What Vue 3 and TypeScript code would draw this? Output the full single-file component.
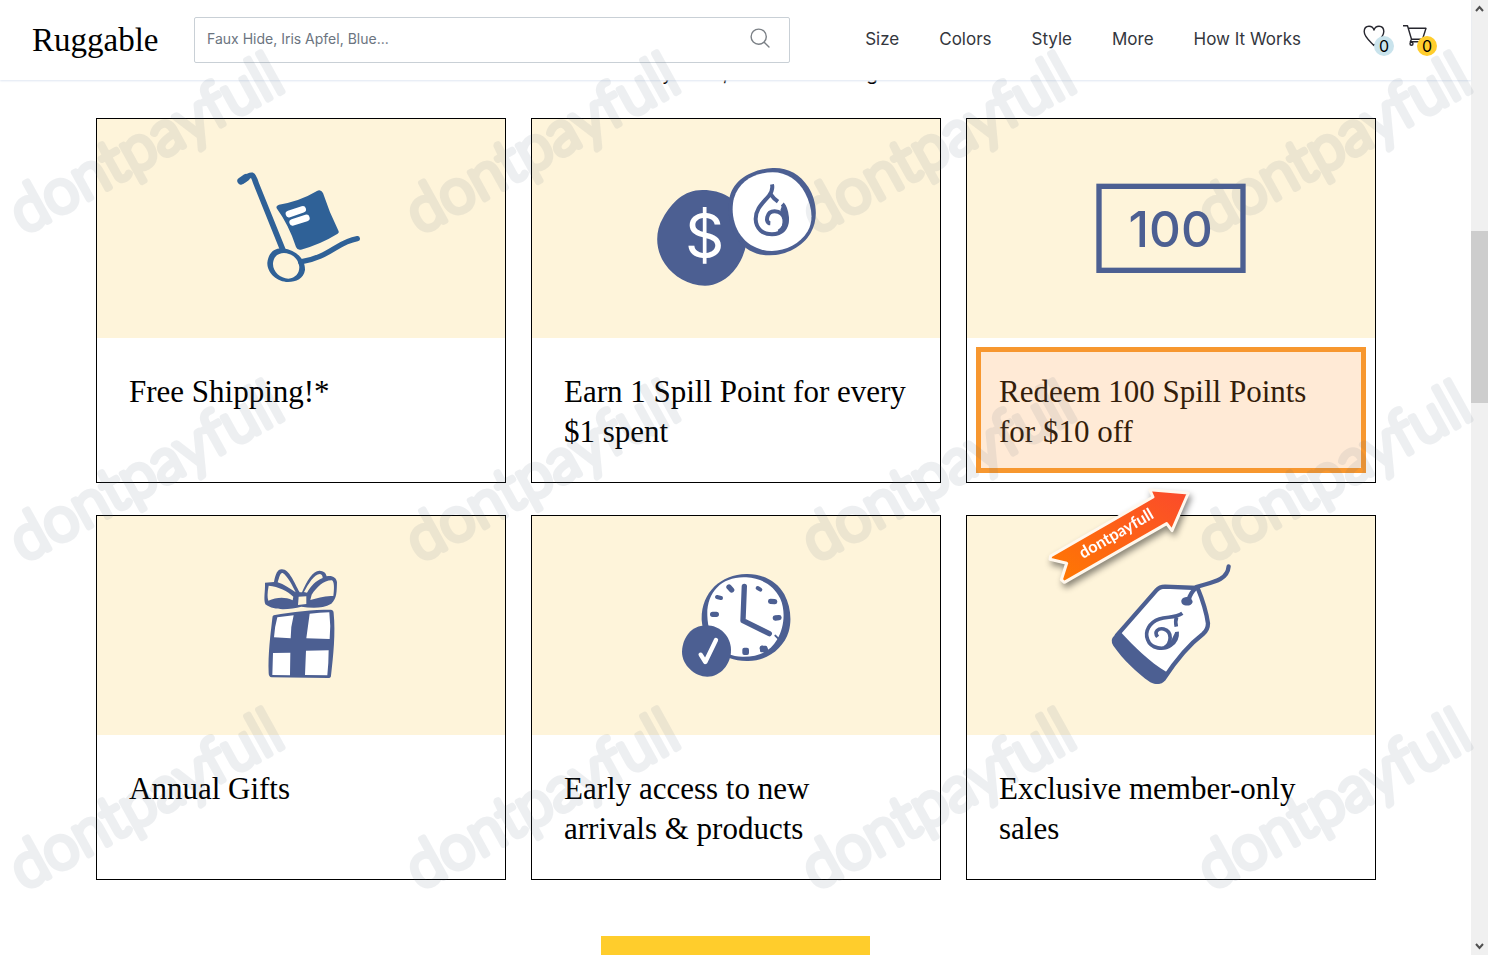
<script setup lang="ts">
interface Perk {
  id: string
  title: string
  highlighted?: boolean
}

const links: string[] = ['Size', 'Colors', 'Style', 'More', 'How It Works']

const perks: Perk[] = [
  { id: 'shipping', title: 'Free Shipping!*' },
  { id: 'earn', title: 'Earn 1 Spill Point for every $1 spent' },
  { id: 'redeem', title: 'Redeem 100 Spill Points for $10 off', highlighted: true },
  { id: 'gifts', title: 'Annual Gifts' },
  { id: 'early', title: 'Early access to new arrivals & products' },
  { id: 'sales', title: 'Exclusive member-only sales' },
]

const marks = [0, 1, 2].flatMap((row) =>
  [0, 1, 2, 3].map((col) => ({ x: 24 + col * 396, y: 235 + row * 328 })),
)
</script>

<template>
  <div class="shell">
    <div class="page">
      <header class="header">
        <a class="logo" href="#">Ruggable</a>
        <form class="search" role="search" @submit.prevent>
          <input type="text" aria-label="Search" placeholder="Faux Hide, Iris Apfel, Blue..." />
          <button type="submit" aria-label="Search">
            <svg width="20" height="20" viewBox="0 0 20 20" fill="none" stroke="#7b8086" stroke-width="1.4">
              <circle cx="8.7" cy="8.7" r="7.6" />
              <path d="M14.2 14.2L19 19" stroke-linecap="round" />
            </svg>
          </button>
        </form>
        <nav class="nav">
          <a v-for="link in links" :key="link" href="#">{{ link }}</a>
        </nav>
        <div class="tools">
          <a class="tool" href="#" aria-label="Wishlist">
            <svg width="24" height="24" viewBox="0 0 24 24" fill="none" stroke="#26262e" stroke-width="1.4" stroke-linejoin="round">
              <path d="M11 21.5C8 18 1.2 13.5 1.2 7.6C1.2 4 3.5 2.2 6 2.2C8.5 2.2 10.3 3.8 11 6C11.7 3.8 13.5 2.2 16 2.2C18.5 2.2 20.8 4 20.8 7.6C20.8 13.5 14 18 11 21.5Z" />
            </svg>
            <span class="count blue">0</span>
          </a>
          <a class="tool" href="#" aria-label="Cart">
            <svg width="26" height="24" viewBox="0 0 26 24" fill="none" stroke="#26262e" stroke-width="1.4" stroke-linejoin="round">
              <path d="M0 1.7H4.5L8.5 15.2H19.5L23 4.3H5.5M8.5 15.2L7.3 17.8H20" />
              <circle cx="8.5" cy="19.8" r="1.5" />
              <circle cx="18" cy="19.8" r="1.5" />
            </svg>
            <span class="count gold">0</span>
          </a>
        </div>
      </header>

      <main>
        <p class="intro"><span>y</span><span>,</span><span>g</span></p>

        <section class="grid">
          <article v-for="perk in perks" :key="perk.id" class="card">
            <div class="media">
              <svg width="408" height="219" viewBox="0 0 408 219" aria-hidden="true">
                <g v-if="perk.id === 'shipping'" transform="translate(123 41) scale(.3333)">
                  <path d="M64 64C76 61 81 44 96 46C103 49 103 58 109 72L188 268" fill="none" stroke="#2f6197" stroke-width="17" stroke-linecap="round" />
                  <path d="M63 63L78 53" stroke="#2f6197" stroke-width="22" stroke-linecap="round" />
                  <path d="M242 306C330 291 351 246 412 236" fill="none" stroke="#2f6197" stroke-width="16" stroke-linecap="round" />
                  <path fill="#2f6197" fill-rule="evenodd" d="M188 265C230 271 256 297 255 330C251 356 229 366 204 366C173 365 141 340 142 308C145 279 163 263 188 265ZM192 279C170 280 160 293 159 312C159 336 181 355 205 356C227 354 238 340 238 321C236 298 218 280 192 279Z" />
                  <path fill="#2f6197" d="M177 134Q239 124 291 93Q302 87 309 99Q328 158 356 214Q358 218 353 221Q303 252 243 269Q233 272 228 261Q207 196 170 145Q167 138 177 134Z" />
                  <path d="M207 162L248 148M218 187L259 174" stroke="#fff" stroke-width="20" stroke-linecap="round" />
                </g>

                <g v-else-if="perk.id === 'earn'" transform="translate(108 31) scale(.3333)">
                  <path fill="#4c5f92" d="M187 120C242 119 290 146 312 190C334 238 321 307 291 350C263 391 225 407 195 407C145 406 102 381 75 342C47 302 43 247 69 204C96 157 132 120 187 120Z" />
                  <text x="194" y="325" class="dollar">$</text>
                  <path fill="#4c5f92" d="M398 54C442 52 480 72 505 111C531 153 536 208 512 249C488 290 439 316 389 316C349 316 318 300 296 272C270 241 262 196 268 149C276 91 334 58 398 54Z" />
                  <path fill="#fff" d="M398 67C440 67 475 91 495 128C515 167 523 209 503 244C481 281 437 303 396 303C356 302 324 286 302 256C279 224 273 180 282 145C296 94 345 67 398 67Z" />
                  <g fill="none" stroke="#4c5f92" stroke-width="12">
                    <path d="M396 103C399 116 394 128 387 137C370 158 347 175 347 207C348 237 369 253 396 253C426 253 443 234 441 203C439 182 435 170 427 162" />
                    <path d="M390 130Q401 146 414 155" />
                    <path d="M391 220C374 219 379 184 404 184C437 184 445 229 416 245" />
                  </g>
                  <path fill="#4c5f92" d="M427 164C438 174 451 201 443 222C435 243 418 252 408 250C431 235 435 203 421 181Z" />
                </g>

                <g v-else-if="perk.id === 'redeem'" transform="translate(113 51) scale(.3333)">
                  <rect x="57" y="49" width="432" height="252" fill="none" stroke="#4c5f92" stroke-width="16" />
                  <text x="272" y="230" class="hundred">100</text>
                </g>

                <g v-else-if="perk.id === 'gifts'" transform="translate(143 39) scale(.3333)">
                  <path fill="#4c5f92" d="M101 181C158 170 219 164 272 164Q281 164 281 175C287 235 280 302 273 362Q273 369 264 369L95 367Q86 366 86 354C84 295 91 244 97 190Q97 183 101 181Z" />
                  <path fill="#fff" d="M112 187L161 181Q152 214 152 250L102 247Q104 215 112 187ZM209 176Q238 173 268 172Q273 212 269 252L199 250ZM99 294L151 293L150 361L97 360ZM198 287L266 286Q266 323 262 361L195 360Z" />
                  <path fill="#4c5f92" d="M75 83L102 81C107 57 112 43 125 43C148 42 163 84 179 112L186 112C200 77 220 46 239 47C250 48 258 53 260 64C275 60 290 67 291 82C290 110 291 130 274 146C246 162 213 159 184 155C151 163 105 170 76 148C70 131 76 110 75 83Z" />
                  <g fill="#fef4da">
                    <path d="M113 82C119 63 121 52 128 54C142 62 157 91 167 112C148 99 132 88 113 82Z" />
                    <path d="M192 111C205 87 222 58 240 57Q248 59 248 69C225 78 213 94 201 113Z" />
                    <path d="M86 92C116 95 143 108 160 125L158 136C132 124 109 128 85 137Q80 124 86 92Z" />
                    <path d="M215 119C231 96 252 75 276 76C283 80 283 101 280 123C254 121 232 130 211 135Z" />
                    <path d="M176 125L199 124L199 147L174 150Z" />
                  </g>
                </g>

                <g v-else-if="perk.id === 'early'" transform="translate(138 44) scale(.3333)">
                  <path fill="#4c5f92" d="M229 42C278 41 321 63 343 103C362 139 366 181 356 215C341 264 291 305 230 303C155 303 100 251 95 180C93 98 151 44 229 42Z" />
                  <path fill="#fff" d="M229 52C277 55 312 77 331 116C347 152 343 202 322 238C302 273 270 290 221 290C156 292 114 239 112 167C110 95 157 48 229 52Z" />
                  <path d="M223 79L219 182L298 221" fill="none" stroke="#4c5f92" stroke-width="16" stroke-linecap="round" stroke-linejoin="round" />
                  <g stroke="#4c5f92" stroke-width="16" stroke-linecap="round">
                    <path d="M177 81L185 90M128 163L139 163M302 124L314 125M316 174L327 173M277 265L286 269" />
                    <path d="M141 111L153 114M263 84L271 89" stroke-width="12" />
                    <path d="M316 227L325 236" stroke-width="6" />
                  </g>
                  <rect x="217" y="263" width="20" height="22" rx="6" fill="#4c5f92" />
                  <rect x="270" y="257" width="22" height="20" rx="5" fill="#4c5f92" />
                  <path fill="#4c5f92" d="M108 196C151 196 182 229 183 269C184 312 151 350 112 350C75 350 36 316 36 275C38 231 65 197 108 196Z" />
                  <path d="M92 284L106 306L138 240" fill="none" stroke="#fff" stroke-width="13" stroke-linecap="round" stroke-linejoin="round" />
                </g>

                <g v-else transform="translate(63 -36) scale(.3333)">
                  <path fill="#fff" stroke="#4c5f92" stroke-width="13" stroke-linejoin="round" d="M260 467L379 331Q389 320 405 320L503 324C517 358 529 395 534 430Q534 450 519 462C473 497 435 545 401 597Q388 611 370 602Z" />
                  <path fill="#4c5f92" d="M272 456C313 500 356 544 411 577L398 602Q384 619 361 607C318 575 281 541 250 497Q239 480 252 468Z" />
                  <path d="M500 322Q480 339 476 360M499 321C535 308 592 306 596 259" fill="none" stroke="#4c5f92" stroke-width="13" stroke-linecap="round" />
                  <path fill="#4c5f92" d="M461 353C474 348 486 355 488 366C486 378 466 380 457 372C452 365 453 357 461 353Z" />
                  <g fill="none" stroke="#4c5f92" stroke-width="11">
                    <path d="M457 400C436 415 413 409 388 417C359 427 343 454 353 479C363 507 401 511 422 496C439 484 443 470 441 455" />
                    <path d="M440 411Q435 424 439 440" />
                    <path d="M383 471C370 454 386 444 401 447C429 455 424 491 404 503" />
                  </g>
                  <path fill="#4c5f92" d="M436 456H446C443 482 428 504 404 507C422 491 427 473 436 456Z" />
                </g>
              </svg>
            </div>
            <div class="body">
              <h2>{{ perk.title }}</h2>
              <div v-if="perk.highlighted" class="frame"></div>
            </div>
            <svg v-if="perk.highlighted" class="arrow" width="220" height="120" viewBox="0 0 660 360">
              <defs>
                <linearGradient id="flame" x1="0" y1="1" x2="1" y2="0">
                  <stop offset="0" stop-color="#ff7a00" />
                  <stop offset="1" stop-color="#fb4a2c" />
                </linearGradient>
              </defs>
              <path fill="url(#flame)" stroke="#fff8ee" stroke-width="9" stroke-linejoin="round" d="M359 29L475 39L426 152L410 131L103 307L94 299L110 250L60 238L62 228L369 51Z" />
              <text class="tag" transform="translate(159 237) rotate(-30)">dontpayfull</text>
            </svg>
          </article>
        </section>

        <button class="cta" type="button" aria-label="Join"></button>
      </main>
    </div>

    <div class="scrollbar">
      <svg width="17" height="17" viewBox="0 0 17 17" fill="none" stroke="#505050" stroke-width="2">
        <path d="M5 11L8.5 7L12 11" />
      </svg>
      <div class="thumb"></div>
      <svg width="17" height="17" viewBox="0 0 17 17" fill="none" stroke="#505050" stroke-width="2">
        <path d="M5 6L8.5 10L12 6" />
      </svg>
    </div>

    <svg class="watermark" aria-hidden="true">
      <text v-for="(m, i) in marks" :key="i" :transform="`translate(${m.x} ${m.y}) rotate(-29)`">dontpayfull</text>
    </svg>
  </div>
</template>

<style>
body {
  margin: 0;
  background: #fff;
}
</style>

<style scoped>
* {
  box-sizing: border-box;
}

.shell {
  position: relative;
  display: flex;
  height: 100vh;
  overflow: hidden;
  background: #fff;
  font-family: Inter, "Liberation Sans", sans-serif;
}

.page {
  flex: 1;
  min-width: 0;
}

.header {
  position: relative;
  z-index: 2;
  display: flex;
  align-items: center;
  height: 80px;
  padding: 0 34px 0 32px;
  background: #fff;
  box-shadow: 0 1px 2px #dfe6f2;
}

a {
  color: #33363d;
  text-decoration: none;
}

.logo {
  width: 162px;
  color: #000;
  font: 33px/40px "Liberation Serif", serif;
}

.search {
  display: flex;
  flex: 1;
  height: 46px;
  margin-right: 75px;
  border: 1px solid #c9d0d6;
  border-radius: 2px;
}

.search input {
  flex: 1;
  min-width: 0;
  padding: 0 12px 2px;
  border: 0;
  outline: 0;
  background: none;
  font: 14px/20px Inter, sans-serif;
}

.search input::placeholder {
  color: #6b7480;
  opacity: 1;
}

.search button {
  display: flex;
  align-items: center;
  padding: 0 19px 4px;
  border: 0;
  background: none;
}

.nav {
  display: flex;
  gap: 40px;
  margin-right: 62px;
  padding-bottom: 2px;
  font-size: 17px;
  line-height: 24px;
  white-space: nowrap;
}

.tools {
  display: flex;
  gap: 16px;
  width: 74px;
}

.tool {
  position: relative;
  width: 24px;
  height: 32px;
}

.count {
  position: absolute;
  top: 12px;
  left: 11px;
  width: 20px;
  height: 20px;
  border-radius: 50%;
  color: #000;
  font-size: 16px;
  line-height: 20px;
  text-align: center;
}

.blue {
  background: #c9e3ec;
}

.gold {
  left: 14px;
  background: #ffcd2c;
}

.intro {
  display: flex;
  height: 38px;
  margin: 0;
  padding-left: 662px;
  color: #000;
  font-size: 19px;
  line-height: 24px;
}

.intro span {
  margin-top: -18px;
}

.intro span + span {
  margin-left: 50px;
}

.intro span:last-child {
  margin-left: 138px;
}

.grid {
  display: grid;
  grid-template-columns: repeat(3, 1fr);
  gap: 32px 25px;
  padding: 0 95px 0 96px;
}

.card {
  position: relative;
  display: flex;
  flex-direction: column;
  border: 1px solid #000;
}

.media {
  display: flex;
  justify-content: center;
  height: 219px;
  background: #fef4da;
}

.body {
  position: relative;
  flex: 1;
  padding: 34px 32px 30px;
}

h2 {
  margin: 0;
  color: #000;
  font: 400 31px/40px "Liberation Serif", serif;
}

.frame {
  position: absolute;
  inset: 9px;
  border: 5px solid #f7972f;
  background: rgba(255, 152, 50, 0.2);
}

.arrow {
  position: absolute;
  z-index: 1;
  top: 361px;
  left: 63px;
  filter: drop-shadow(2px 4px 3px rgba(0, 0, 0, 0.45));
}

.tag {
  fill: #fff;
  font: 700 49px Lato, sans-serif;
}

.dollar {
  fill: #fff;
  font: 400 184px Inter, sans-serif;
  text-anchor: middle;
}

.hundred {
  fill: #4c5f92;
  font: 500 148px Inter, sans-serif;
  text-anchor: middle;
}

.cta {
  display: block;
  width: 269px;
  height: 56px;
  margin: 56px auto 0;
  border: 0;
  background: #ffcd2c;
}

.scrollbar {
  position: relative;
  display: flex;
  flex-direction: column;
  justify-content: space-between;
  width: 17px;
  background: #f0f0f0;
}

.thumb {
  position: absolute;
  top: 24.2%;
  width: 100%;
  height: 18%;
  background: #cdcdcd;
}

.watermark {
  position: absolute;
  z-index: 3;
  inset: 0;
  width: 100%;
  height: 100%;
  pointer-events: none;
  opacity: 0.1;
}

.watermark text {
  fill: #5a6c80;
  stroke: #5a6c80;
  stroke-width: 6px;
  stroke-linecap: round;
  stroke-linejoin: round;
  font: 300 62px Lato, sans-serif;
}
</style>
